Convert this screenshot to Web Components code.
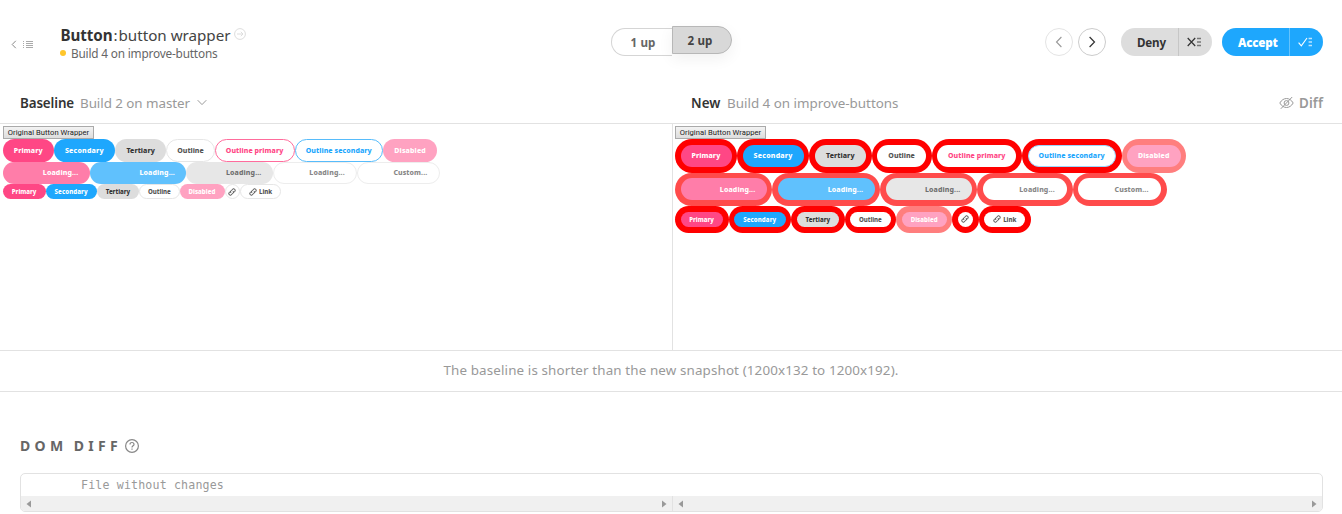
<!DOCTYPE html>
<html lang="en">
<head>
<meta charset="utf-8">
<title>Snapshot review</title>
<style>
html,body{margin:0;height:100%;overflow:hidden;background:#fff}
body{font-family:"Noto Sans","Open Sans",sans-serif;color:#333}
</style>
</head>
<body>
<review-page></review-page>
<script>
function define(name, html, setup) {
  const tpl = document.createElement('template');
  tpl.innerHTML = html;
  customElements.define(name, class extends HTMLElement {
    connectedCallback() {
      if (this.shadowRoot) return;
      const root = this.attachShadow({ mode: 'open' });
      root.append(tpl.content.cloneNode(true));
      if (setup) setup(this, root);
    }
  });
}

/* Story buttons by row: kind, label, label width */
const ROW = {
  normal: [['primary','Primary',29],['secondary','Secondary',39],['tertiary','Tertiary',28.5],['outline','Outline',26.5],['outp','Outline primary',57.5],['outs','Outline secondary',66],['disabled','Disabled',31.5]],
  loading: [['primary','Loading...',35.5],['secondary','Loading...',35.5],['tertiary','Loading...',35.5],['outline','Loading...',35.5],['outline','Custom...',34]],
  small: [['primary','Primary',24.7],['secondary','Secondary',33],['tertiary','Tertiary',24.5],['outline','Outline',22.7],['disabled','Disabled',27],['outline','',0],['outline','Link',13]]
};
const LINK = '<svg viewBox="0 0 16 16" width="8" height="8" fill="none" stroke="#333" stroke-width="1.9"><path d="M6.400 10.300C4.800 9 4.800 7 6 5.600L8.700 2.700C10 1.300 12 1.200 13.300 2.400s1.400 3.200.2 4.600L11.800 9M9.600 5.700c1.600 1.300 1.600 3.300.4 4.700l-2.700 2.900c-1.300 1.400-3.300 1.500-4.600.3s-1.400-3.200-.2-4.600L4.200 7"/></svg>';

define('stage-button', `<style>
:host{display:block;box-sizing:border-box;flex:none;height:100%;border-radius:20px;padding:var(--ring,0px);background:var(--rc,transparent)}
:host([faded]){opacity:.7}:host([kind=disabled]){opacity:.5}
div{box-sizing:border-box;display:flex;align-items:center;justify-content:center;gap:2px;width:100%;height:100%;border-radius:20px;border:1px solid transparent;background:#fff;color:#333;white-space:nowrap;padding-right:.5px}
:host([right]) div{justify-content:flex-end;padding-right:11.5px}
:host([kind=primary]) div,:host([kind=disabled]) div{background:#ff4785;color:#fff;border:0}
:host([kind=secondary]) div{background:#1ea7fd;color:#fff;border:0}
:host([kind=tertiary]) div{background:#ddd;border:0}
:host([kind=outline]) div{border:.6px solid var(--edge,#e6e6e6);color:#555}
:host([kind=outp]) div{border-color:var(--edge,#ff6c9c);color:#ff4785}
:host([kind=outs]) div{border-color:var(--edge2,#57bcfb);color:#1ea7fd}
</style><div><slot></slot></div>`);

define('button-row', `<style>:host{display:flex;flex:none}</style>`, (el, root) => {
  const type = el.getAttribute('type'), widths = el.getAttribute('widths').split(' ');
  const fs = type === 'small' ? 6.1 : 7;
  root.innerHTML += ROW[type].map(([kind, label, w], i) =>
    `<stage-button kind="${kind}" ${type === 'loading' ? 'faded right' : ''} style="width:${widths[i]}px">${
      kind === 'outline' && (!label || label === 'Link') ? LINK : ''}${
      label ? `<fit-text w="${w}" style="font-size:${fs}px;font-weight:800">${label}</fit-text>` : ''}</stage-button>`).join('');
});

define('story-snapshot', `<style>
:host{display:block;padding:2px 0 0 3px;box-sizing:border-box}
.orig{box-sizing:border-box;width:91px;height:13px;border:1px solid #aaa;background:linear-gradient(#f3f3f3,#ddd);display:flex;align-items:center;justify-content:center;font:7.6px Roboto,sans-serif;color:#222}
</style><div class="orig"><fit-text w="81.5">Original Button Wrapper</fit-text></div><slot></slot>`);

define('circle-button', `<style>
:host{display:flex;box-sizing:border-box;width:28px;height:28px;border:1px solid #ccc;border-radius:50%;align-items:center;justify-content:center;color:#333}
:host([off]){border-color:#e4e4e4;color:#999}
</style><slot></slot>`);

define('split-button', `<style>
:host{display:flex;box-sizing:border-box;height:28px;border-radius:14px;background:#ddd;color:#333;font-size:11.6px;font-weight:700}
:host([accept]){background:#1ea7fd;color:#fff}
div{display:flex;align-items:center;padding-left:16px;flex:1}
span{display:flex;align-items:center;width:34px;padding-left:8px;box-sizing:border-box;border-left:1px solid #c6c6c6}
:host([accept]) span{border-color:#65c3fd}
</style><div><slot></slot></div><span><slot name="icon"></slot></span>`);

define('mode-toggle', `<style>
:host{display:flex;font-size:11.600px;font-weight:700;color:#666}
div{box-sizing:border-box;height:28px;display:flex;align-items:center;justify-content:center;border:1px solid #d5d5d5}
.a{width:61px;border-radius:14px 0 0 14px;margin-top:2px;padding-left:2px;border-right:0}
.b{width:60px;border-radius:0 14px 14px 0;background:#d8d8d8;border-color:#b7b7b7;color:#444;margin-bottom:2px;padding-right:4px;box-shadow:0 5px 15px rgba(0,0,0,.06)}
</style><div class="a"><fit-text w="25">1 up</fit-text></div><div class="b"><fit-text w="25">2 up</fit-text></div>`);

define('page-header', `<style>
:host{display:grid;grid-template-columns:611px 121px 1fr;height:85px;align-items:start}
.left{display:flex;padding-top:24px}
.nav{display:flex;align-items:center;gap:6px;height:40px;padding-left:11px;width:49px}
.title{display:flex;align-items:center;height:21px;font-size:15.2px;color:#444}
.title b{font-weight:700;color:#333;display:flex}
.sub{display:flex;align-items:center;gap:5px;height:16px;font-size:11.8px;color:#666}
.dot{width:6px;height:6px;border-radius:50%;background:#ffc62b}
mode-toggle{margin-top:26px}
.right{display:flex;justify-content:flex-end;padding:28px 19px 0 0}
svg{display:block;flex:none}
</style>
<div class="left">
 <div class="nav"><svg width="6" height="9" viewBox="0 0 6 9" fill="none" stroke="#888"><path d="M4.800.8 1.200 4.500l3.600 3.700"/></svg>
 <svg width="10" height="9" viewBox="0 0 10 9" stroke="#aaa"><path d="M0 1.500h1M0 3.500h1M0 5.500h1M0 7.500h1M3 1.500h7M3 3.500h7M3 5.500h7M3 7.500h7"/></svg></div>
 <div><div class="title"><b><fit-text w="52" style="margin-left:.5px">Button</fit-text></b><span style="width:6px;text-align:center">:</span><fit-text w="112">button wrapper</fit-text>
 <svg style="margin:0 0 1px 3.500px" width="12" height="12" viewBox="0 0 12 12" fill="none" stroke="#ddd"><circle cx="6" cy="6" r="5.400"/><path d="M3 6h6M6.800 3.800 9 6 6.800 8.200"/></svg></div>
 <div class="sub"><i class="dot"></i><fit-text w="146.5">Build 4 on improve-buttons</fit-text></div></div>
</div>
<mode-toggle></mode-toggle>
<div class="right">
 <circle-button off><svg width="8" height="12" viewBox="0 0 8 12" fill="none" stroke="currentColor" stroke-width="1.1"><path d="M6.400 1 1.500 6l4.900 5"/></svg></circle-button>
 <circle-button style="margin-left:5px"><svg width="8" height="12" viewBox="0 0 8 12" fill="none" stroke="currentColor" stroke-width="1.2"><path d="M1.600 1 6.500 6l-4.900 5"/></svg></circle-button>
 <split-button style="width:91px;margin-left:15px"><fit-text w="29">Deny</fit-text><svg slot="icon" width="14" height="10" viewBox="0 0 14 10" stroke="#333"><path d="M.7 1l7.500 8M8.200 1l-7.500 8" stroke-width="1.2"/><path d="M10 1.500h4M10 5h4M10 8.500h4" stroke="#777" stroke-width="1.3"/></svg></split-button>
 <split-button accept style="width:101px;margin-left:10px"><fit-text w="39.5" style="font-weight:900">Accept</fit-text><svg slot="icon" width="14" height="10" viewBox="0 0 14 10" fill="none" stroke="#fff"><path d="M.6 5.600 3.300 8.800 9 1" stroke-width="1.1"/><path d="M10.600 1.500H14M10.600 5H14M10.600 8.500H14" stroke="#bbe4ff" stroke-width="1.3"/></svg></split-button>
</div>`);

define('compare-view', `<style>
:host{display:grid;grid-template-columns:672px 1fr;grid-template-rows:38px 1px 226px 1px}
.head{display:flex;align-items:center;padding:0 19px 3px 20px;font-size:13.400px;color:#999}
.head b{font-weight:600;color:#333}
.head.n{padding-left:19px}
.rule{grid-column:1/3;background:#e2e2e2}
.pane+.pane{border-left:1px solid #e2e2e2;--ring:5.600px;--rc:#f00;--edge:transparent;--edge2:#9bd7fd}
.pane+.pane story-snapshot{padding-left:2px}
svg{display:block}
</style>
<div class="head"><b><fit-text w="54">Baseline</fit-text></b><fit-text w="110" style="margin-left:6px">Build 2 on master</fit-text>
<svg style="margin-left:7px" width="10" height="7" viewBox="0 0 10 7" fill="none" stroke="#999"><path d="M.7 1.200 5 5.600l4.300-4.400"/></svg></div>
<div class="head n"><b><fit-text w="29.5">New</fit-text></b><fit-text w="171.5" style="margin-left:6.500px">Build 4 on improve-buttons</fit-text>
<svg style="margin-left:auto" width="15" height="14" viewBox="0 0 15 14" fill="none" stroke="#999"><path d="M.8 7C2.500 4 5 2.500 7.500 2.500S12.500 4 14.200 7C12.500 10 10 11.500 7.500 11.500S2.500 10 .8 7z"/><circle cx="7.500" cy="7" r="2.400"/><path d="M1.800 12.800 13.200 1"/></svg>
<fit-text w="24" style="margin-left:5px;font-weight:600">Diff</fit-text></div>
<div class="rule"></div>
<div class="pane"><story-snapshot>
<button-row type="normal" style="height:22.500px" widths="51 61.300 51.200 48.500 79.700 88.600 54.200"></button-row>
<button-row type="loading" style="height:22.300px" widths="86.800 96.700 86.500 84.300 82.600"></button-row>
<button-row type="small" style="height:15.500px" widths="42.700 51.300 42.500 40.200 45 15.500 41.300"></button-row>
</story-snapshot></div>
<div class="pane"><story-snapshot>
<button-row type="normal" style="height:33.700px" widths="62.300 72.100 62.400 60.100 90.200 99.600 64.800"></button-row>
<button-row type="loading" style="height:33.400px" widths="97.400 107.900 97.200 95.400 93.800"></button-row>
<button-row type="small" style="height:26.700px" widths="53.500 62.900 53.400 51.600 56 26.500 52.200"></button-row>
</story-snapshot></div>
<div class="rule"></div>`);

define('size-notice', `<style>:host{display:flex;box-sizing:border-box;height:41px;align-items:center;justify-content:center;border-bottom:1px solid #e2e2e2;color:#999;font-size:13.400px;padding-bottom:2px}</style><slot></slot>`);

define('scroll-track', `<style>:host{display:flex;align-items:center;justify-content:space-between;background:#f0f0f0;padding:1px 5px 0}svg{display:block}</style>
<svg width="5" height="8"><path d="M5 .5v7L.5 4z" fill="#999"/></svg><svg width="5" height="8"><path d="M0 .5v7L4.500 4z" fill="#999"/></svg>`);

define('dom-diff', `<style>
:host{display:block;padding:46px 19px 0 20px}
h2{margin:0;display:flex;align-items:center;height:17px;font-size:14px;font-weight:700;color:#666}
h2 fit-text{word-spacing:-1.500px;margin-bottom:2px}
h2 svg{margin:0 0 1px 3px}
.box{box-sizing:border-box;margin-top:18px;height:39px;border:1px solid #e2e2e2;border-radius:5px;overflow:hidden;display:grid;grid-template-columns:651px 1fr;grid-template-rows:22px 15px}
.msg{grid-column:1/3;padding-left:60px;font:11.600px/23px "DejaVu Sans Mono",monospace;color:#999}
scroll-track+scroll-track{border-left:1px solid #e2e2e2}
</style>
<h2><fit-text w="102">DOM DIFF</fit-text><svg width="14" height="14" viewBox="0 0 14 14" fill="none" stroke="#888" stroke-width="1.2"><circle cx="7" cy="7" r="6.400"/><path d="M5 5.500c0-1.200.9-2 2-2s2 .8 2 1.900C9 6.800 7 6.900 7 8.500M7 9.500v1.200"/></svg></h2>
<div class="box"><div class="msg"><fit-text w="143">File without changes</fit-text></div><scroll-track></scroll-track><scroll-track></scroll-track></div>`);

define('review-page', `<style>:host{display:block;width:1342px;height:514px;overflow:hidden}</style>
<page-header></page-header><compare-view></compare-view>
<size-notice><fit-text w="455">The baseline is shorter than the new snapshot (1200x132 to 1200x192).</fit-text></size-notice>
<dom-diff></dom-diff>`);

/* Text set to a given measure by tracking; defined last so its ancestors are rendered when it measures. */
define('fit-text', `<style>:host{display:inline-block;white-space:nowrap;flex:none}span{display:inline-block}</style><span><slot></slot></span>`, (el, root) => {
  const w = +el.getAttribute('w'), s = root.querySelector('span');
  const n = el.textContent.length;
  s.style.letterSpacing = (w - s.getBoundingClientRect().width) / n + 'px';
  el.style.width = w + 'px';
});
</script>
</body>
</html>
